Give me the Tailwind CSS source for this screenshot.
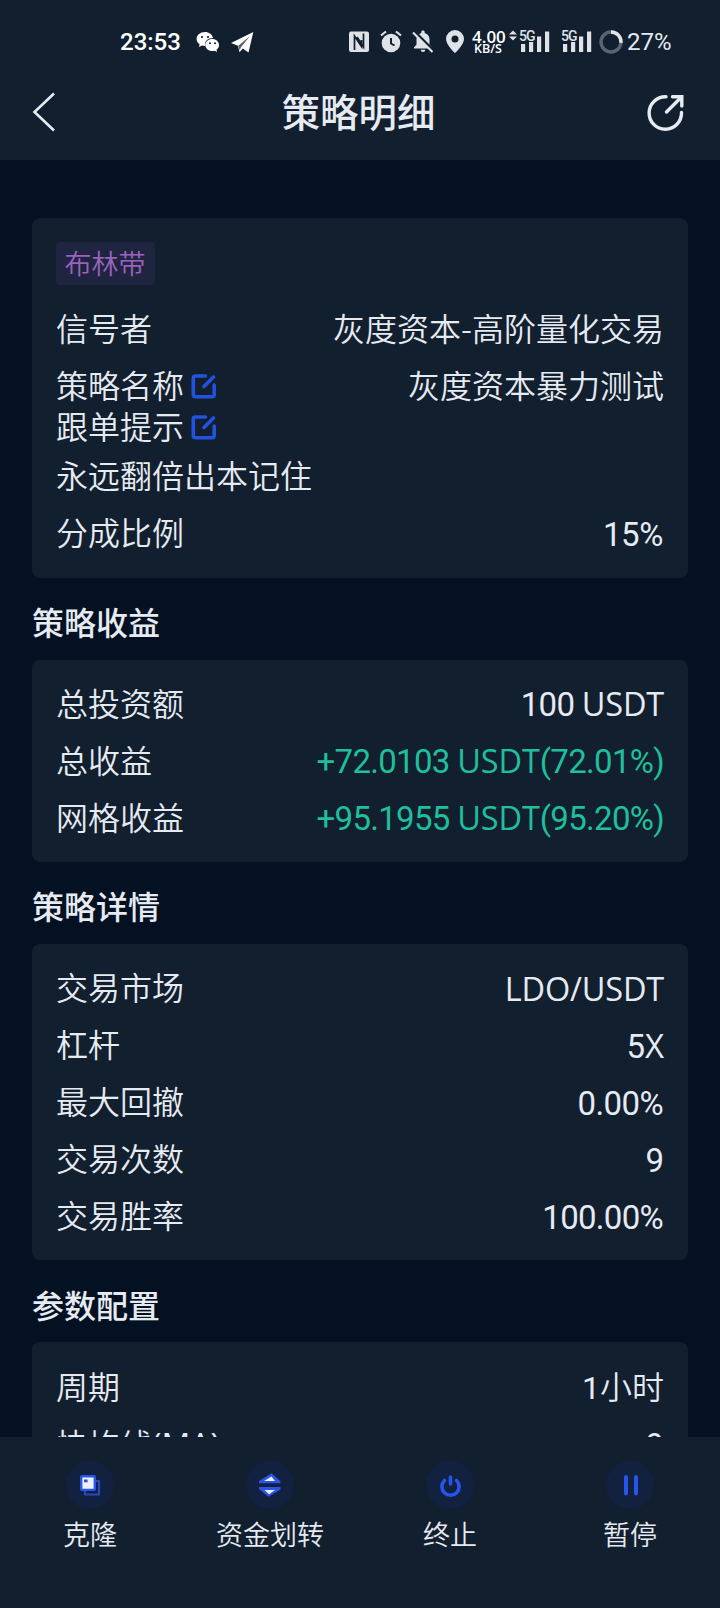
<!DOCTYPE html>
<html lang="zh-CN">
<head>
<meta charset="utf-8">
<title>策略明细</title>
<script src="https://cdn.jsdelivr.net/npm/@tailwindcss/browser@4"></script>
</head>
<body class="bg-[#041122]">
<div class="relative flex h-[1608px] w-[720px] flex-col overflow-hidden bg-[#041122] font-['Noto_Sans_CJK_SC',sans-serif] text-[32px] font-[350] text-[#e6eaf1]">

  <header class="h-40 shrink-0 bg-[#121f2f]">
    <div class="flex h-16 pt-[30px] pl-[120px] text-white">
      <span class="h-6 w-[76px] font-[Roboto] text-[24px] leading-6 font-medium">23:53</span>
      <svg class="h-6 w-[35px]" viewBox="0 0 35 24" fill="#fff"><path d="M9 2C4.300 2 .6 5 .6 9c0 2.200 1.200 4 3 5.300L3 17l3-1.500c1 .3 2 .4 3 .4C8.500 11 12 8 17 8 16.300 4.500 13 2 9 2z"/><path d="M16.300 9c-4 0-7 2.700-7 6s3 6 7 6c.8 0 1.600-.1 2.300-.3L21 22l-.5-2.300c1.500-1.100 2.500-2.800 2.500-4.700 0-3.300-3-6-6.700-6z"/><g fill="#121f2f"><circle cx="6" cy="7" r="1.100"/><circle cx="12" cy="7" r="1.100"/><circle cx="14" cy="13.300" r="1"/><circle cx="19" cy="13.300" r="1"/></g></svg>
      <svg class="h-6 w-[118px]" viewBox="0 0 118 24" fill="#fff"><path d="M0 13 22.300 2 17.500 22.500 11.800 18.500 8.500 22.300 7 15.800z"/><path d="M7.300 15.800 19 6 9.800 17.500 8.800 20.500" fill="#5a6471"/></svg>
      <svg class="h-6 w-[31px]" viewBox="0 0 31 24"><rect y="1.500" width="20" height="20.500" rx="2" fill="#dfe2e7"/><path d="M5.500 20V6L12.500 16.500V10M14.500 3.500V17L8 7" fill="none" stroke="#121f2f" stroke-width="1.700"/></svg>
      <svg class="h-6 w-[32px]" viewBox="0 0 32 24"><circle cx="11" cy="13" r="9.300" fill="#dfe2e7"/><path d="M1 5.500 6 1.500M21 5.500 16 1.500" stroke="#dfe2e7" stroke-width="2.200"/><path d="M11 8v5.500l3.500 2" fill="none" stroke="#121f2f" stroke-width="2"/></svg>
      <svg class="h-6 w-[34px]" viewBox="0 0 34 24"><path d="M11 .5c1 0 1.700.7 1.700 1.700v.7c3 .8 4.800 3.200 4.800 6.400v5.500l2.500 2.500v1.300H2v-1.300l2.500-2.500V9.300C4.500 6.100 6.300 3.700 9.300 2.900v-.7C9.300 1.200 10 .5 11 .5zM8.700 19.700h4.600a2.300 2.300 0 0 1-4.600 0z" fill="#dfe2e7"/><path d="M2.500 1.500 22 21" stroke="#121f2f" stroke-width="2.500"/><path d="M1 2.500 20.500 22" stroke="#dfe2e7" stroke-width="2.200"/></svg>
      <svg class="h-6 w-[26px]" viewBox="0 0 26 24"><path fill-rule="evenodd" d="M9 0a9 9 0 0 0-9 9c0 6 9 14 9 14s9-8 9-14a9 9 0 0 0-9-9zm0 5.500a3.500 3.500 0 1 1 0 7 3.500 3.500 0 0 1 0-7z" fill="#dfe2e7"/></svg>
      <div class="flex h-6 w-[37px] flex-col items-start font-['Open_Sans'] font-semibold">
        <span class="h-[13px] text-[17px] leading-[13px] whitespace-nowrap">4.00</span>
        <span class="h-[11px] pl-[2px] text-[12.500px] leading-[11px] whitespace-nowrap">KB/S</span>
      </div>
      <svg class="h-6 w-[10px]" viewBox="0 0 10 24" fill="#dfe2e7"><path d="M0 4.500 4 .5l4 4zM0 6.500h8l-4 4z"/></svg>
      <div class="relative h-6 w-[42px]">
        <svg class="h-6 w-[32px]" viewBox="0 0 32 24" fill="#dfe2e7"><path d="M2 14h4.200v8H2zM10 12h4.200v10H10zM18 6.500h4.200V22H18zM26 1.500h4.200V22H26z"/></svg>
        <span class="absolute top-0 left-0 h-[11.500px] bg-[#121f2f] font-[Roboto] text-[14px] leading-[12px] font-medium tracking-[-1px] text-[#dfe2e7]">5G</span>
      </div>
      <div class="relative h-6 w-[37px]">
        <svg class="h-6 w-[32px]" viewBox="0 0 32 24" fill="#dfe2e7"><path d="M2 14h4.200v8H2zM10 12h4.200v10H10zM18 6.500h4.200V22H18zM26 1.500h4.200V22H26z"/></svg>
        <span class="absolute top-0 left-0 h-[11.500px] bg-[#121f2f] font-[Roboto] text-[14px] leading-[12px] font-medium tracking-[-1px] text-[#dfe2e7]">5G</span>
      </div>
      <svg class="h-6 w-[29px]" viewBox="0 0 29 24" fill="none" stroke-width="3.400"><circle cx="13" cy="12" r="10" stroke="#596371"/><path d="M13 2a10 10 0 0 1 10 10.800" stroke="#dfe2e7"/></svg>
      <span class="h-6 font-[Roboto] text-[24px] leading-[24px] font-normal text-[#e6eaf1]">27%</span>
    </div>
    <div class="flex h-24 items-center justify-between pr-[34px] pl-8">
      <svg class="h-10 w-[40px]" viewBox="0 0 40 40" fill="none" stroke="#e6eaf1" stroke-width="2.600"><path d="M22 1.500 2.500 20 22 38.500"/></svg>
      <h1 class="mr-px mb-[4px] text-[38.400px] leading-none font-medium">策略明细</h1>
      <svg class="h-10 w-[40px]" viewBox="0 0 40 40" fill="none" stroke="#e6eaf1" stroke-width="3.400" stroke-linecap="round"><path d="M20 4.800A16.200 16.200 0 1 0 35.500 20.500M20.500 20 35 5.500M26.500 4.800h9.300v9.300"/></svg>
    </div>
  </header>

  <main class="flex min-h-0 grow flex-col overflow-hidden px-8 pt-[58px] leading-none">
    <section class="h-[360px] shrink-0 rounded-lg bg-[#121f2f] px-6 pt-6">
      <div class="mb-[13px] flex h-[43px] w-[99px] items-center justify-center rounded bg-[#1f2540] pr-px pb-0.5 text-[27px] text-[#9a62bd]">布林带</div>
      <div class="flex h-[57px] items-center justify-between"><span>信号者</span><span>灰度资本-高阶量化交易</span></div>
      <div class="flex h-[54px] items-center justify-between pt-[3px]">
        <span class="flex items-center gap-[7px]">策略名称
          <svg class="mt-[4px] h-[26px] w-[26px]" viewBox="0 0 26 26" fill="none" stroke="#2352e0" stroke-width="3.600" stroke-linecap="round"><path d="M14.500 3H4.500Q2.300 3 2.300 5.200V21.500Q2.300 23.700 4.500 23.700H21Q23.200 23.700 23.200 21.500V12M13 13.500 22.500 4"/></svg>
        </span>
        <span>灰度资本暴力测试</span>
      </div>
      <div class="flex h-[32px] items-center gap-[7px]">跟单提示
        <svg class="mt-[4px] h-[26px] w-[26px]" viewBox="0 0 26 26" fill="none" stroke="#2352e0" stroke-width="3.600" stroke-linecap="round"><path d="M14.500 3H4.500Q2.300 3 2.300 5.200V21.500Q2.300 23.700 4.500 23.700H21Q23.200 23.700 23.200 21.500V12M13 13.500 22.500 4"/></svg>
      </div>
      <div class="flex h-[61px] items-center pt-[4px]">永远翻倍出本记住</div>
      <div class="flex h-[57px] items-center justify-between"><span>分成比例</span><span class="pt-[7px] pr-px font-[Roboto] text-[33px] font-normal tracking-[-0.4px]">15%</span></div>
    </section>

    <h2 class="flex h-[82px] shrink-0 items-center pt-1 font-medium">策略收益</h2>
    <section class="h-[202px] shrink-0 rounded-lg bg-[#121f2f] px-6 pt-[13px]">
      <div class="flex h-[57px] items-center justify-between"><span>总投资额</span><span class="pt-[5px] font-[Roboto] text-[33px] font-normal tracking-[-0.7px]">100 <span class="font-['Open_Sans'] text-[32.500px] tracking-[-0.2px]">USDT</span></span></div>
      <div class="flex h-[57px] items-center justify-between"><span>总收益</span><span class="pt-[5px] font-[Roboto] text-[33px] font-normal tracking-[-0.7px] text-[#1fbf9c]">+72.0103 <span class="font-['Open_Sans'] text-[32.500px] tracking-[-0.1px]">USDT</span>(72.01%)</span></div>
      <div class="flex h-[57px] items-center justify-between"><span>网格收益</span><span class="pt-[5px] font-[Roboto] text-[33px] font-normal tracking-[-0.7px] text-[#1fbf9c]">+95.1955 <span class="font-['Open_Sans'] text-[32.500px] tracking-[-0.1px]">USDT</span>(95.20%)</span></div>
    </section>

    <h2 class="flex h-[82px] shrink-0 items-center pt-1 font-medium">策略详情</h2>
    <section class="h-[316px] shrink-0 rounded-lg bg-[#121f2f] px-6 pt-[13px]">
      <div class="flex h-[57px] items-center justify-between"><span>交易市场</span><span class="pt-[7px] font-['Open_Sans'] text-[32.500px] font-normal tracking-[-0.2px]">LDO/USDT</span></div>
      <div class="flex h-[57px] items-center justify-between"><span>杠杆</span><span class="pt-[6px] font-[Roboto] text-[33px] font-normal">5<span class="font-['Open_Sans'] text-[33px]">X</span></span></div>
      <div class="flex h-[57px] items-center justify-between"><span>最大回撤</span><span class="pt-[7px] pr-px font-[Roboto] text-[33px] font-normal tracking-[-0.6px]">0.00%</span></div>
      <div class="flex h-[57px] items-center justify-between"><span>交易次数</span><span class="pt-[7px] font-[Roboto] text-[33px] font-normal">9</span></div>
      <div class="flex h-[57px] items-center justify-between"><span>交易胜率</span><span class="pt-[7px] pr-px font-[Roboto] text-[33px] font-normal tracking-[-0.7px]">100.00%</span></div>
    </section>

    <h2 class="flex h-[82px] shrink-0 items-center pt-1.5 font-medium">参数配置</h2>
    <section class="h-[202px] shrink-0 rounded-lg bg-[#121f2f] px-6 pt-[14px]">
      <div class="flex h-[57px] items-center justify-between"><span>周期</span><span class="pt-[3px]"><span class="font-[Roboto] font-normal">1</span>小时</span></div>
      <div class="flex h-[57px] items-center justify-between"><span class="pt-[5px]">快均线<span class="font-['Open_Sans'] font-normal">(MA)</span></span><span class="pt-[7px] font-[Roboto] text-[33px] font-normal">9</span></div>
    </section>
  </main>

  <nav class="grid h-[171px] shrink-0 grid-cols-4 bg-[#121f2f] pt-6 text-[27px] leading-none">
    <div class="flex flex-col items-center gap-[11px]">
      <svg class="h-12 w-12" viewBox="0 0 48 48"><circle cx="24" cy="24" r="24" fill="#11213f"/><path d="M30 20h3v13.500H19V30" fill="none" stroke="#2548c4" stroke-width="2.200" stroke-linejoin="round"/><rect x="15.200" y="15.300" width="13.600" height="13.600" rx="1" fill="#eef2ff" stroke="#2b55e6" stroke-width="2.400"/><rect x="18" y="18.500" width="3.600" height="2.800" fill="#2b4fc4"/></svg>
      <span>克隆</span>
    </div>
    <div class="flex flex-col items-center gap-[11px]">
      <svg class="h-12 w-12" viewBox="0 0 48 48"><circle cx="24" cy="24" r="24" fill="#11213f"/><path d="M13 22.300V20l12.500-7.800L34.500 20.300v2zM13 26h21.500v2.500L22.500 35.700 13 28z" fill="#2b55e6"/><path d="M18 20 25.500 15.500l3.500 4.500zM18.500 29h10.500l-6 4.200z" fill="#eef2ff"/></svg>
      <span>资金划转</span>
    </div>
    <div class="flex flex-col items-center gap-[11px]">
      <svg class="h-12 w-12" viewBox="0 0 48 48"><circle cx="24" cy="24" r="24" fill="#11213f"/><path d="M18.500 19.500a8.600 8.600 0 1 0 12 0M24.500 16v7" fill="none" stroke="#2754ea" stroke-width="3.600" stroke-linecap="round"/></svg>
      <span>终止</span>
    </div>
    <div class="flex flex-col items-center gap-[11px]">
      <svg class="h-12 w-12" viewBox="0 0 48 48"><circle cx="24" cy="24" r="24" fill="#11213f"/><path d="M20 16v16.500M30 16v16.500" stroke="#2754ea" stroke-width="4" stroke-linecap="round"/></svg>
      <span>暂停</span>
    </div>
  </nav>
</div>
</body>
</html>
